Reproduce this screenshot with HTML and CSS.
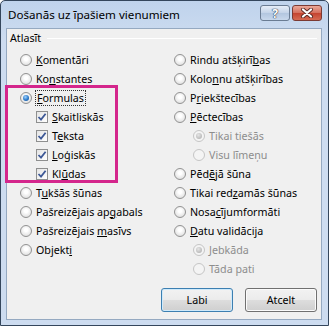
FILE: index.html
```html
<!DOCTYPE html>
<html lang="lv">
<head>
    <meta charset="UTF-8">
    <title>Došanās uz īpašiem vienumiem</title>
    <link rel="stylesheet" href="styles.css">
</head>
<body>
    <div class="dialog">
        <!-- Title bar -->
        <div class="titlebar">
            <span class="title">Došanās uz īpašiem vienumiem</span>
            <div class="caption-btns">
                <span class="cbtn help">?</span>
                <span class="cbtn close">
                    <svg width="14" height="10" viewBox="0 0 14 10">
                        <path d="M3 1.5 L11 8.5 M11 1.5 L3 8.5" stroke="#5a2b26" stroke-width="4" stroke-linecap="round"/>
                        <path d="M3 1.5 L11 8.5 M11 1.5 L3 8.5" stroke="#ffffff" stroke-width="2.2" stroke-linecap="round"/>
                    </svg>
                </span>
            </div>
        </div>

        <!-- Client area -->
        <div class="client">
            <div class="group-head">
                <span>Atlasīt</span>
                <span class="rule"></span>
            </div>

            <div class="cols">
                <ul class="col">
                    <li class="opt"><i class="radio"></i><span><u>K</u>omentāri</span></li>
                    <li class="opt"><i class="radio"></i><span>Ko<u>n</u>stantes</span></li>
                    <li class="opt"><i class="radio on"></i><span class="focus"><u>F</u>ormulas</span></li>
                    <li class="opt sub"><i class="check"><svg width="10" height="10" viewBox="0 0 10 10"><path d="M1.5 5 L4 7.6 L8.6 1.8" stroke="#3d5896" stroke-width="1.8" fill="none"/></svg></i><span><u>S</u>kaitliskās</span></li>
                    <li class="opt sub"><i class="check"><svg width="10" height="10" viewBox="0 0 10 10"><path d="M1.5 5 L4 7.6 L8.6 1.8" stroke="#3d5896" stroke-width="1.8" fill="none"/></svg></i><span>T<u>e</u>ksta</span></li>
                    <li class="opt sub"><i class="check"><svg width="10" height="10" viewBox="0 0 10 10"><path d="M1.5 5 L4 7.6 L8.6 1.8" stroke="#3d5896" stroke-width="1.8" fill="none"/></svg></i><span><u>L</u>oģiskās</span></li>
                    <li class="opt sub"><i class="check"><svg width="10" height="10" viewBox="0 0 10 10"><path d="M1.5 5 L4 7.6 L8.6 1.8" stroke="#3d5896" stroke-width="1.8" fill="none"/></svg></i><span>Kl<u>ū</u>das</span></li>
                    <li class="opt"><i class="radio"></i><span>T<u>u</u>kšās šūnas</span></li>
                    <li class="opt"><i class="radio"></i><span>Pašreizējais ap<u>g</u>abals</span></li>
                    <li class="opt"><i class="radio"></i><span>Pašreizējais <u>m</u>asīvs</span></li>
                    <li class="opt"><i class="radio"></i><span>Objekt<u>i</u></span></li>
                </ul>
                <ul class="col">
                    <li class="opt"><i class="radio"></i><span>Rindu atšķirī<u>b</u>as</span></li>
                    <li class="opt"><i class="radio"></i><span>Kolo<u>n</u>nu atšķirības</span></li>
                    <li class="opt"><i class="radio"></i><span>P<u>r</u>iekštecības</span></li>
                    <li class="opt"><i class="radio"></i><span><u>P</u>ēctecības</span></li>
                    <li class="opt sub off"><i class="radio on"></i><span>Tikai tiešās</span></li>
                    <li class="opt sub off"><i class="radio"></i><span>Visu līmeņu</span></li>
                    <li class="opt"><i class="radio"></i><span>Pēd<u>ē</u>jā šūna</span></li>
                    <li class="opt"><i class="radio"></i><span>Tikai red<u>z</u>amās šūnas</span></li>
                    <li class="opt"><i class="radio"></i><span>Nosa<u>c</u>ījumformāti</span></li>
                    <li class="opt"><i class="radio"></i><span><u>D</u>atu validācija</span></li>
                    <li class="opt sub off"><i class="radio on"></i><span>Jebkāda</span></li>
                    <li class="opt sub off"><i class="radio"></i><span>Tāda pati</span></li>
                </ul>
            </div>

            <!-- Annotation box around the Formulas group -->
            <div class="highlight"></div>

            <div class="actions">
                <button class="btn default">Labi</button>
                <button class="btn">Atcelt</button>
            </div>
        </div>
    </div>
</body>
</html>
```

FILE: styles.css
```css
/* Basic Reset */
* {
    margin: 0;
    padding: 0;
    box-sizing: border-box;
}

body {
    font-family: "Noto Sans", "Open Sans", sans-serif;
    font-size: 10.7px;
    color: #000;
    background: #ffffff;
}

/* Window frame */
.dialog {
    width: 329px;
    height: 326px;
    border: 1px solid #34465c;
    border-radius: 5px 5px 0 0;
    background: linear-gradient(#bfd3ec, #cddcf0 40px, #cddcf0);
    padding: 0 6px 5px 5px;
    display: flex;
    flex-direction: column;
}

/* Title bar */
.titlebar {
    height: 27px;
    display: flex;
    align-items: flex-start;
    justify-content: space-between;
    padding: 4px 0 0 2px;
}

.title {
    font-size: 11.6px;
    line-height: 20px;
    color: #000;
}

.caption-btns {
    display: flex;
    gap: 2px;
}

.cbtn {
    width: 30px;
    height: 16px;
    border: 1px solid #6a7c93;
    border-radius: 3px;
    display: flex;
    align-items: center;
    justify-content: center;
}

.help {
    background: linear-gradient(#e6eef8, #c3d3e8 50%, #b2c6df 51%, #c8d8ec);
    color: #fff;
    font-weight: bold;
    font-size: 12px;
    text-shadow: 0 0 1px #2f3d52, 0 0 1px #2f3d52, 0 0 1px #2f3d52;
}

.close {
    border-color: #7b3a33;
    background: linear-gradient(#eba898, #d46e5c 50%, #c4432f 51%, #d66a52);
}

/* Client area */
.client {
    flex: 1;
    position: relative;
    background: #f0f0f0;
    border: 1px solid #95a9c1;
    display: flex;
    flex-direction: column;
    padding: 2px 4px 7px 3px;
}

.group-head {
    display: flex;
    align-items: center;
    gap: 6px;
    line-height: 14px;
}

.rule {
    flex: 1;
    height: 1px;
    background: #d5dfe5;
    border-bottom: 1px solid #fff;
}

.cols {
    display: grid;
    grid-template-columns: 164px 1fr;
    margin-top: 5px;
}

.col {
    list-style: none;
}

.col:first-child {
    padding-left: 10px;
}

.opt {
    height: 19px;
    display: flex;
    align-items: center;
    gap: 4px;
    white-space: nowrap;
}

.opt.sub {
    padding-left: 16px;
}

.col + .col .opt.sub {
    padding-left: 19px;
}

.opt.off {
    color: #8d8d8d;
}

.focus {
    outline: 1px dotted #333;
    outline-offset: 0;
    padding: 0 1px;
}

/* Radio buttons */
.radio {
    width: 12px;
    height: 12px;
    flex: none;
    border-radius: 50%;
    border: 1px solid #929292;
    background: radial-gradient(circle at 50% 40%, #ffffff 20%, #e2e2e2 75%, #d2d2d2);
    position: relative;
}

.radio.on::after {
    content: "";
    position: absolute;
    left: 2px;
    top: 2px;
    width: 6px;
    height: 6px;
    border-radius: 50%;
    background: radial-gradient(circle at 40% 35%, #9fd3ff, #2a78c8 55%, #174d8c);
}

.off .radio {
    border-color: #c5c5c5;
    background: #f4f4f4;
}

.off .radio.on::after {
    background: radial-gradient(circle at 40% 35%, #e5e5e5, #a9a9a9);
}

/* Check boxes */
.check {
    width: 12px;
    height: 12px;
    flex: none;
    border: 1px solid #8e8f8f;
    background: linear-gradient(135deg, #e4e4e4, #ffffff);
    display: flex;
    align-items: center;
    justify-content: center;
}

/* Pink annotation */
.highlight {
    position: absolute;
    left: -2px;
    top: 56px;
    width: 113px;
    height: 98px;
    border: 3px solid #d4268c;
}

/* Buttons */
.actions {
    margin-top: auto;
    display: flex;
    justify-content: flex-end;
    gap: 12px;
}

.btn {
    width: 72px;
    height: 24px;
    font-family: inherit;
    font-size: 10.7px;
    color: #000;
    border: 1px solid #707070;
    border-radius: 3px;
    background: linear-gradient(#f2f2f2, #ebebeb 50%, #dddddd 51%, #cfcfcf);
    box-shadow: inset 0 0 0 1px #fbfbfb;
}

.btn.default {
    border-color: #3c7fb1;
    box-shadow: inset 0 0 0 1px #cfeafb;
}
```
